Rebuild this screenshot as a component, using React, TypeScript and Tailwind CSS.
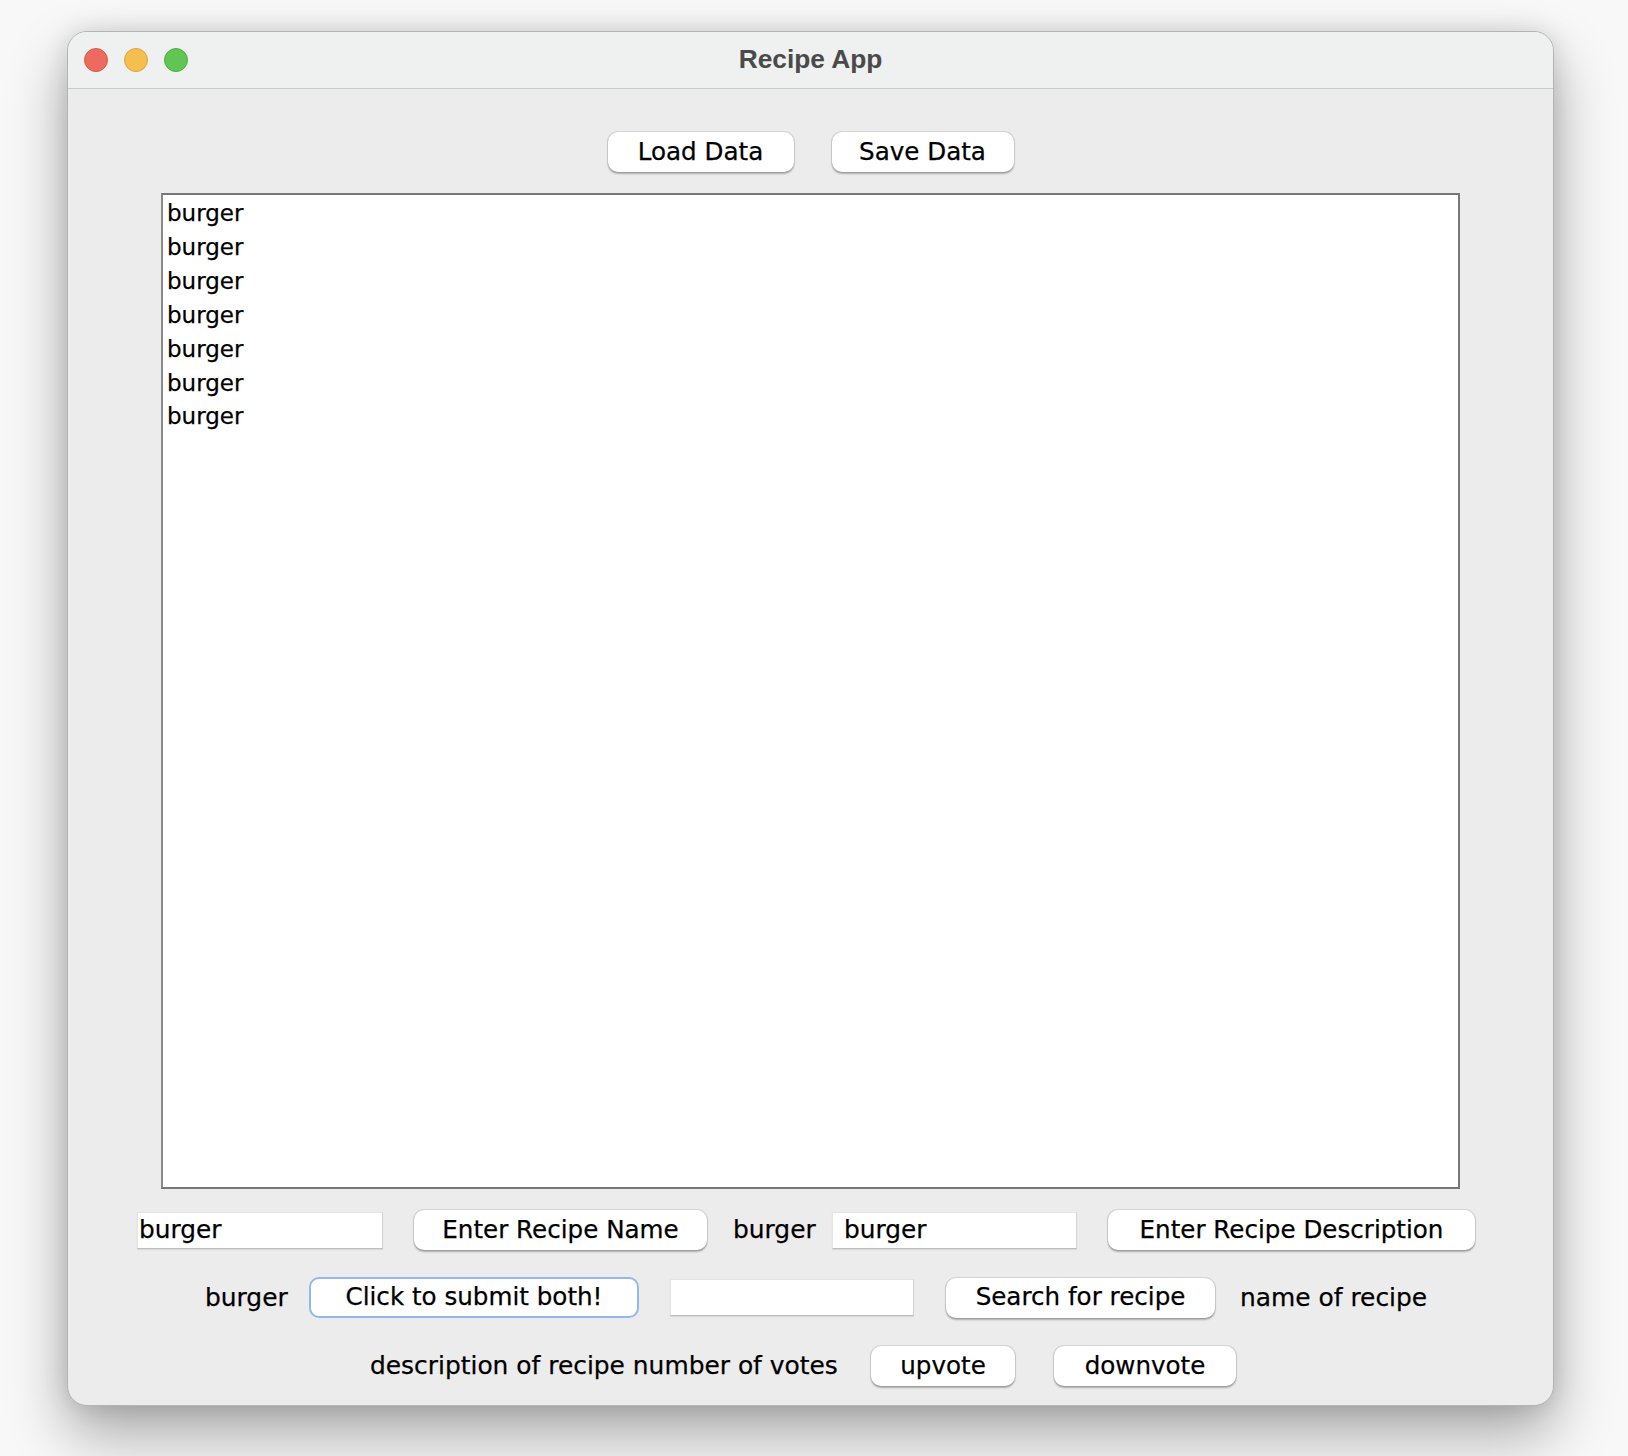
import React from "react";

const btn =
  "flex h-[40px] items-center justify-center rounded-[10px] bg-white text-[24.6px] text-black shadow-[0_0_0_1px_rgba(0,0,0,0.09),0_1.5px_2px_rgba(0,0,0,0.28)] whitespace-nowrap [-webkit-text-stroke:0.25px_black]";
const field =
  "flex h-[37px] items-center bg-white text-[24.8px] text-black border border-[#e4e4e4] border-b-[#bdbdbd] border-r-[#d4d4d4] shadow-[0_1px_1px_rgba(0,0,0,0.08)] whitespace-nowrap overflow-hidden [-webkit-text-stroke:0.25px_black]";
const label = "text-[24.9px] text-black whitespace-nowrap [-webkit-text-stroke:0.25px_black]";

export default function App() {
  const rows = Array.from({ length: 7 }, () => "burger");
  return (
    <div className="w-[1628px] h-[1456px] bg-[#f8f8f8] pt-[31px] pl-[67px] font-['DejaVu_Sans',sans-serif]">
      <div className="flex w-[1487px] h-[1375px] flex-col overflow-hidden rounded-[20px] border border-[#b4b4b4] bg-[#ececec] shadow-[0_28px_60px_rgba(0,0,0,0.33),0_0_24px_rgba(0,0,0,0.12)]">
        {/* title bar */}
        <div className="grid h-[57px] shrink-0 grid-cols-[1fr_auto_1fr] items-center border-b border-[#c9c9c9] bg-[#eff0f0]">
          <div className="flex items-center gap-[16px] pl-[16px]">
            <div className="h-[24px] w-[24px] rounded-full border border-[#d9574b] bg-[#ee6a5f]" />
            <div className="h-[24px] w-[24px] rounded-full border border-[#dba33e] bg-[#f5bf4f]" />
            <div className="h-[24px] w-[24px] rounded-full border border-[#4fae44] bg-[#61c554]" />
          </div>
          <div className="font-['Liberation_Sans',Arial,sans-serif] text-[26.3px] font-bold text-[#4a4a4a]">
            Recipe App
          </div>
          <div />
        </div>

        {/* content */}
        <div className="flex flex-col pt-[43px]">
          <div className="flex justify-center gap-[38px]">
            <div className={`${btn} w-[186px]`}>Load Data</div>
            <div className={`${btn} w-[182px]`}>Save Data</div>
          </div>

          <div className="mx-auto mt-[21px] h-[996px] w-[1299px] border-2 border-[#777777] border-l-[#8a8a8a] bg-white pl-[4px] pt-[2px]">
            {rows.map((r, i) => (
              <div key={i} className="text-[23px] leading-[33.9px] text-black [-webkit-text-stroke:0.25px_black]">
                {r}
              </div>
            ))}
          </div>

          {/* row 1 */}
          <div className="mt-[21px] flex h-[40px] items-center pl-[69px]">
            <div className={`${field} w-[246px] pl-[1px]`}>burger</div>
            <div className={`${btn} ml-[31px] w-[293px]`}>Enter Recipe Name</div>
            <div className={`${label} ml-[26px] w-[80px]`}>burger</div>
            <div className={`${field} ml-[19px] w-[245px] pl-[11px]`}>burger</div>
            <div className={`${btn} ml-[31px] w-[367px]`}>Enter Recipe Description</div>
          </div>

          {/* row 2 */}
          <div className="mt-[27px] flex h-[41px] items-center pl-[137px]">
            <div className={`${label} w-[81px]`}>burger</div>
            <div className="ml-[23px] flex h-[41px] w-[330px] items-center justify-center rounded-[10px] border-2 border-[#8fb9ee] bg-white text-[24.6px] text-black whitespace-nowrap [-webkit-text-stroke:0.25px_black]">
              Click to submit both!
            </div>
            <div className={`${field} ml-[31px] w-[244px]`} />
            <div className={`${btn} ml-[32px] w-[269px]`}>Search for recipe</div>
            <div className={`${label} ml-[25px] w-[184px]`}>name of recipe</div>
          </div>

          {/* row 3 */}
          <div className="mt-[28px] flex h-[40px] items-center pl-[302px]">
            <div className={`${label} w-[474px]`}>description of recipe number of votes</div>
            <div className={`${btn} ml-[27px] w-[144px]`}>upvote</div>
            <div className={`${btn} ml-[39px] w-[182px]`}>downvote</div>
          </div>
        </div>
      </div>
    </div>
  );
}
